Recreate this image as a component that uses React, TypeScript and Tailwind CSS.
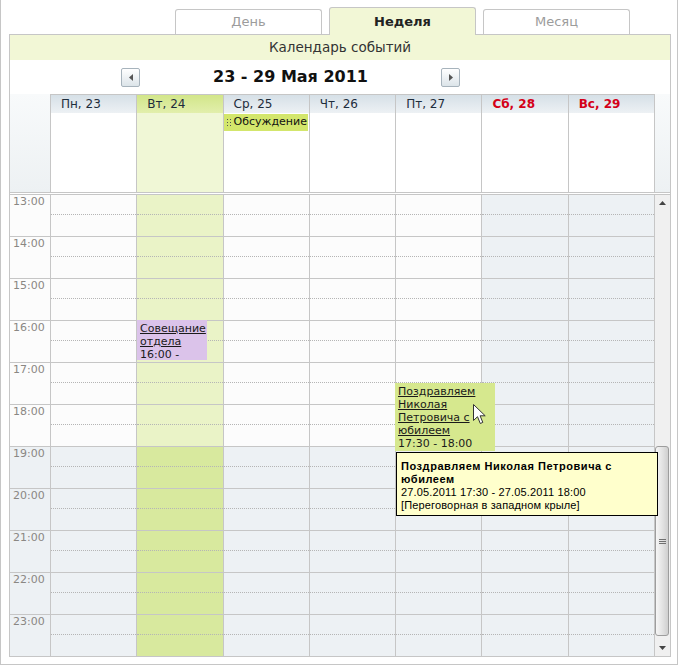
import React from 'react';

const days = [
  { label: 'Пн, 23' },
  { label: 'Вт, 24', today: true },
  { label: 'Ср, 25' },
  { label: 'Чт, 26' },
  { label: 'Пт, 27' },
  { label: 'Сб, 28', weekend: true },
  { label: 'Вс, 29', weekend: true },
];

const hours = [13, 14, 15, 16, 17, 18, 19, 20, 21, 22, 23];

function cellBg(i: number, hour: number) {
  const off = hour >= 19;
  if (days[i].today) return off ? 'bg-[#d8e99e]' : 'bg-[#eaf3c7]';
  if (days[i].weekend) return 'bg-[#edf1f4]';
  return off ? 'bg-[#edf1f4]' : 'bg-[#fcfcfc]';
}

function Tab({ label, active }: { label: string; active?: boolean }) {
  if (active) {
    return (
      <div className="relative z-10 -mb-px w-[147px] h-[28px] border border-b-0 border-[#c6c6c6] rounded-t-[3px] bg-[#f2f7d6] flex items-center justify-center text-[13px] font-bold text-[#222]">
        {label}
      </div>
    );
  }
  return (
    <div className="w-[147px] h-[25px] border border-b-0 border-[#c6c6c6] rounded-t-[3px] bg-white flex items-center justify-center text-[13px] text-[#9c9c9c]">
      {label}
    </div>
  );
}

function NavButton({ dir }: { dir: 'left' | 'right' }) {
  return (
    <div className="w-[19px] h-[19px] border border-[#a7b3bc] rounded-[2px] bg-gradient-to-b from-white to-[#dce4e9] flex items-center justify-center">
      <svg width="4" height="7" viewBox="0 0 4 7">
        {dir === 'left' ? <path d="M4 0 L0 3.5 L4 7 Z" fill="#555" /> : <path d="M0 0 L4 3.5 L0 7 Z" fill="#555" />}
      </svg>
    </div>
  );
}

function Grip() {
  return (
    <svg width="6" height="9" viewBox="0 0 6 9" className="mr-[2px] shrink-0">
      {[0, 3, 6].map((y) => (
        <React.Fragment key={y}>
          <rect x="1" y={y + 1} width="1" height="1" fill="#555" />
          <rect x="4" y={y + 1} width="1" height="1" fill="#555" />
        </React.Fragment>
      ))}
    </svg>
  );
}

export default function App() {
  return (
    <div className="w-[678px] h-[665px] bg-white border-l border-r border-b border-[#c6c6c6] font-['DejaVu_Sans',Verdana,sans-serif] text-[#222]">
      {/* tabs */}
      <div className="h-[34px] flex items-end pl-[174px] gap-[7px]">
        <Tab label="День" />
        <Tab label="Неделя" active />
        <Tab label="Месяц" />
      </div>

      <div className="ml-[8px] w-[662px] border border-[#c6c6c6]">
        <div className="h-[25px] bg-[#f2f7d6] flex items-center justify-center text-[13.5px] text-[#333]">
          Календарь событий
        </div>

        <div className="h-[34px] flex items-center">
          <div className="ml-[111px]">
            <NavButton dir="left" />
          </div>
          <div className="w-[301px] text-center text-[16px] font-bold text-[#111]">23 - 29 Мая 2011</div>
          <NavButton dir="right" />
        </div>

        {/* header + all-day */}
        <div className="flex border-b border-[#c6c6c6]">
          <div className="w-[40px] bg-gradient-to-b from-[#f8fafb] to-[#edf1f3]" />
          <div className="flex-1 flex flex-col border-t border-r border-[#c6c6c6]">
            <div className="flex h-[18px]">
              {days.map((d) => (
                <div
                  key={d.label}
                  className={`flex-1 border-l border-[#c6c6c6] pl-[10px] text-[12px] leading-[18px] ${
                    d.today ? 'bg-gradient-to-b from-[#d2e689] to-[#e2efac]' : 'bg-gradient-to-b from-[#d6e0e7] to-[#edf1f4]'
                  } ${d.weekend ? 'text-[#d40018] font-bold' : 'text-[#1e2d3c]'}`}
                >
                  {d.label}
                </div>
              ))}
            </div>
            <div className="flex h-[79px]">
              {days.map((d, i) => (
                <div key={d.label} className={`flex-1 border-l border-[#c6c6c6] ${d.today ? 'bg-[#f0f7d6]' : 'bg-white'}`}>
                  {i === 2 && (
                    <div className="mt-[1px] mr-[1px] h-[17px] bg-[#d3e66c] flex items-center pl-[2px] text-[11px] text-[#111] whitespace-nowrap overflow-hidden">
                      <Grip />
                      Обсуждение
                    </div>
                  )}
                </div>
              ))}
            </div>
          </div>
          <div className="w-[15px] bg-gradient-to-b from-[#f8fafb] to-[#edf1f3]" />
        </div>
        <div className="h-px" />

        {/* hour grid */}
        <div className="relative flex">
          <div className="flex-1 flex flex-col">
            {hours.map((h) => (
              <div key={h} className="flex h-[42px] border-t border-[#c6c6c6]">
                <div className={`w-[40px] pl-[3px] text-[11px] leading-[13px] text-[#8a8783] ${h >= 19 ? 'bg-[#edf1f4]' : 'bg-[#fcfcfc]'}`}>
                  {h}:00
                </div>
                {days.map((d, i) => (
                  <div
                    key={d.label}
                    className={`flex-1 flex flex-col border-l border-[#c6c6c6] ${i === 6 ? 'border-r' : ''} ${cellBg(i, h)}`}
                  >
                    <div className="h-[20px] border-b border-dotted border-[#b5b5b5]" />
                  </div>
                ))}
              </div>
            ))}
          </div>

          {/* scrollbar */}
          <div className="w-[15px] flex flex-col border-t border-[#c6c6c6] bg-[#f0f0f0]">
            <div className="h-[16px] flex items-center justify-center">
              <svg width="7" height="4" viewBox="0 0 7 4">
                <path d="M0 4 L3.5 0 L7 4 Z" fill="#444" />
              </svg>
            </div>
            <div className="h-[235px]" />
            <div className="w-[14px] h-[190px] rounded-[3px] border border-[#9d9d9d] bg-gradient-to-r from-[#f6f6f6] via-[#e4e4e4] to-[#cfcfcf] flex flex-col items-center justify-center gap-[1px]">
              <div className="w-[7px] h-px bg-[#707070]" />
              <div className="w-[7px] h-px bg-[#707070]" />
              <div className="w-[7px] h-px bg-[#707070]" />
            </div>
            <div className="flex-1" />
            <div className="h-[16px] flex items-center justify-center">
              <svg width="7" height="4" viewBox="0 0 7 4">
                <path d="M0 0 L3.5 4 L7 0 Z" fill="#444" />
              </svg>
            </div>
          </div>

          {/* events */}
          <div className="absolute left-[127px] top-[126px] w-[70px] h-[40px] bg-[#dbc3ea] pl-[3px] pt-[2px] text-[11px] leading-[13px] text-[#1a1a1a] overflow-hidden">
            <span className="underline">Совещание отдела</span>
            <br />
            16:00 -
          </div>

          <div className="absolute left-[385px] top-[189px] w-[100px] h-[68px] bg-[#d6e88e] pl-[3px] pt-[2px] text-[11px] leading-[13px] text-[#1a1a1a] overflow-hidden">
            <span className="underline">Поздравляем Николая Петровича с юбилеем</span>
            <br />
            17:30 - 18:00
          </div>

          <svg className="absolute left-[463px] top-[210px] z-30" width="13" height="21" viewBox="0 0 13 21">
            <path d="M0.5 0.5 L0.5 16.5 L4.5 12.7 L7.3 19.5 L9.8 18.4 L7.1 11.8 L12.2 11.8 Z" fill="white" stroke="#333" strokeWidth="1" />
          </svg>

          <div className="absolute left-[386px] top-[258px] z-20 w-[262px] h-[64px] bg-[#ffffcc] border border-black px-[4px] pt-[7px] text-[11px] leading-[13px] text-black font-['Liberation_Sans',Arial,sans-serif]">
            <div className="font-bold tracking-[0.55px]">Поздравляем Николая Петровича с юбилеем</div>
            <div className="tracking-[0.15px]">27.05.2011 17:30 - 27.05.2011 18:00</div>
            <div className="tracking-[0.15px]">[Переговорная в западном крыле]</div>
          </div>
        </div>
      </div>
    </div>
  );
}
